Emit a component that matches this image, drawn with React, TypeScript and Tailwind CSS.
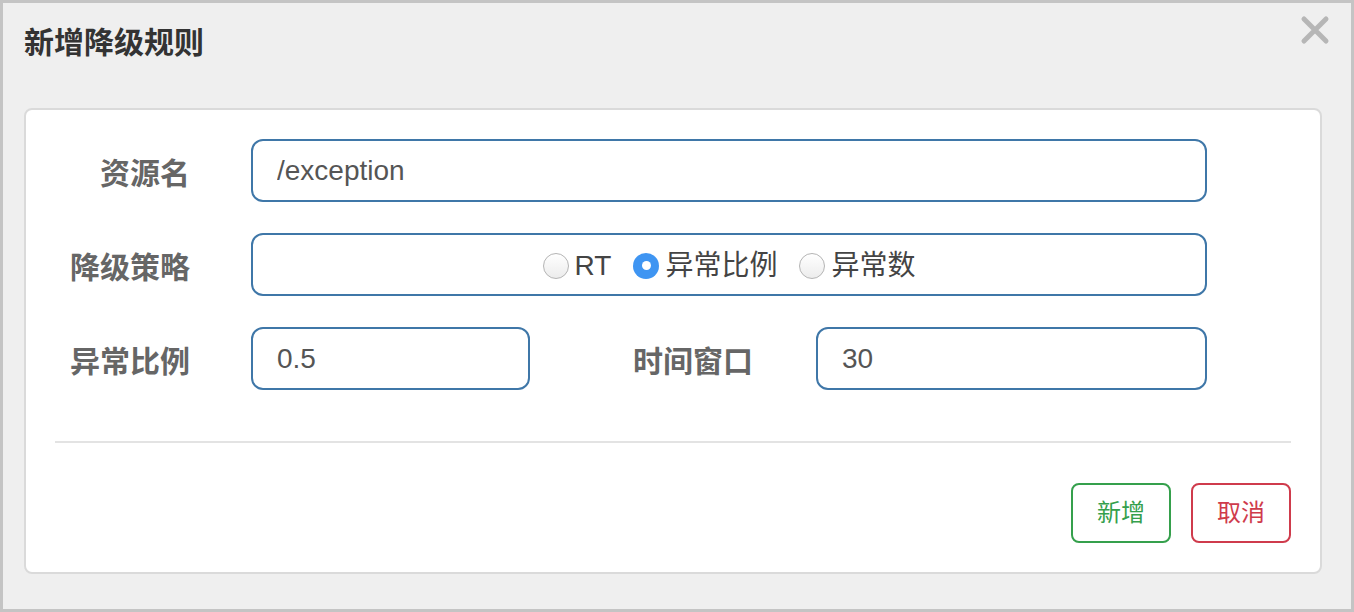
import React from "react"

const cjk = "font-['Helvetica_Neue','Liberation_Sans','Noto_Sans_CJK_SC',sans-serif]"
const label = "pt-[6px] text-right text-[30px] font-bold text-[#666]"
const field = `h-[63px] rounded-[12px] border-2 border-[#3f77a8] px-[24px] text-[28px] text-[#555] outline-none ${cjk}`

function Radio({ checked, label }: { checked?: boolean; label: string }) {
  return (
    <label className="flex items-center gap-[6px]">
      {checked ? (
        <span className="flex h-[26px] w-[26px] items-center justify-center rounded-full bg-[#3f95f2]">
          <span className="h-[9px] w-[9px] rounded-full bg-white" />
        </span>
      ) : (
        <span className="h-[26px] w-[26px] rounded-full border border-[#b4b4b4] bg-gradient-to-b from-white to-[#ececec]" />
      )}
      <span className="text-[28px] leading-none text-[#444]">{label}</span>
    </label>
  )
}

export default function App() {
  return (
    <div className={`relative h-[612px] w-[1354px] border-[3px] border-[#c4c4c4] bg-[#efefef] ${cjk}`}>
      {/* header */}
      <div className="flex h-[105px] items-start pl-[21px] pt-[25px]">
        <h4 className="text-[30px] font-bold leading-none text-[#333]">新增降级规则</h4>
      </div>
      <button className="absolute right-[21px] top-[12px] p-0">
        <svg width="30" height="30" viewBox="0 0 30 30">
          <path d="M4 4 L26 26 M26 4 L4 26" stroke="#b6b6b6" strokeWidth="5" strokeLinecap="round" />
        </svg>
      </button>

      {/* body card */}
      <div className="ml-[21px] h-[466px] w-[1298px] rounded-[8px] border-2 border-[#dadada] bg-white">
        <div className="flex flex-col gap-[31px] pt-[29px]">
          <div className="flex items-center">
            <div className={`w-[225px] pr-[61px] ${label}`}>资源名</div>
            <input readOnly value="/exception" className={`w-[956px] ${field}`} />
          </div>
          <div className="flex items-center">
            <div className={`w-[225px] pr-[61px] ${label}`}>降级策略</div>
            <div className="flex h-[63px] w-[956px] items-center justify-center gap-[22px] rounded-[12px] border-2 border-[#3f77a8] pt-[2px]">
              <Radio label="RT" />
              <Radio checked label="异常比例" />
              <Radio label="异常数" />
            </div>
          </div>
          <div className="flex items-center">
            <div className={`w-[225px] pr-[61px] ${label}`}>异常比例</div>
            <input readOnly value="0.5" className={`w-[279px] ${field}`} />
            <div className={`w-[286px] pr-[63px] ${label}`}>时间窗口</div>
            <input readOnly value="30" className={`w-[391px] ${field}`} />
          </div>
        </div>

        <div className="mx-[29px] mt-[51px] h-[2px] bg-[#e3e3e3]" />

        <div className="flex justify-end gap-[20px] pr-[29px] pt-[40px]">
          <button className="h-[60px] w-[100px] rounded-[8px] border-2 border-[#35a04c] text-[24px] text-[#35a04c]">
            新增
          </button>
          <button className="h-[60px] w-[100px] rounded-[8px] border-2 border-[#cf3b4c] text-[24px] text-[#cf3b4c]">
            取消
          </button>
        </div>
      </div>
    </div>
  )
}
